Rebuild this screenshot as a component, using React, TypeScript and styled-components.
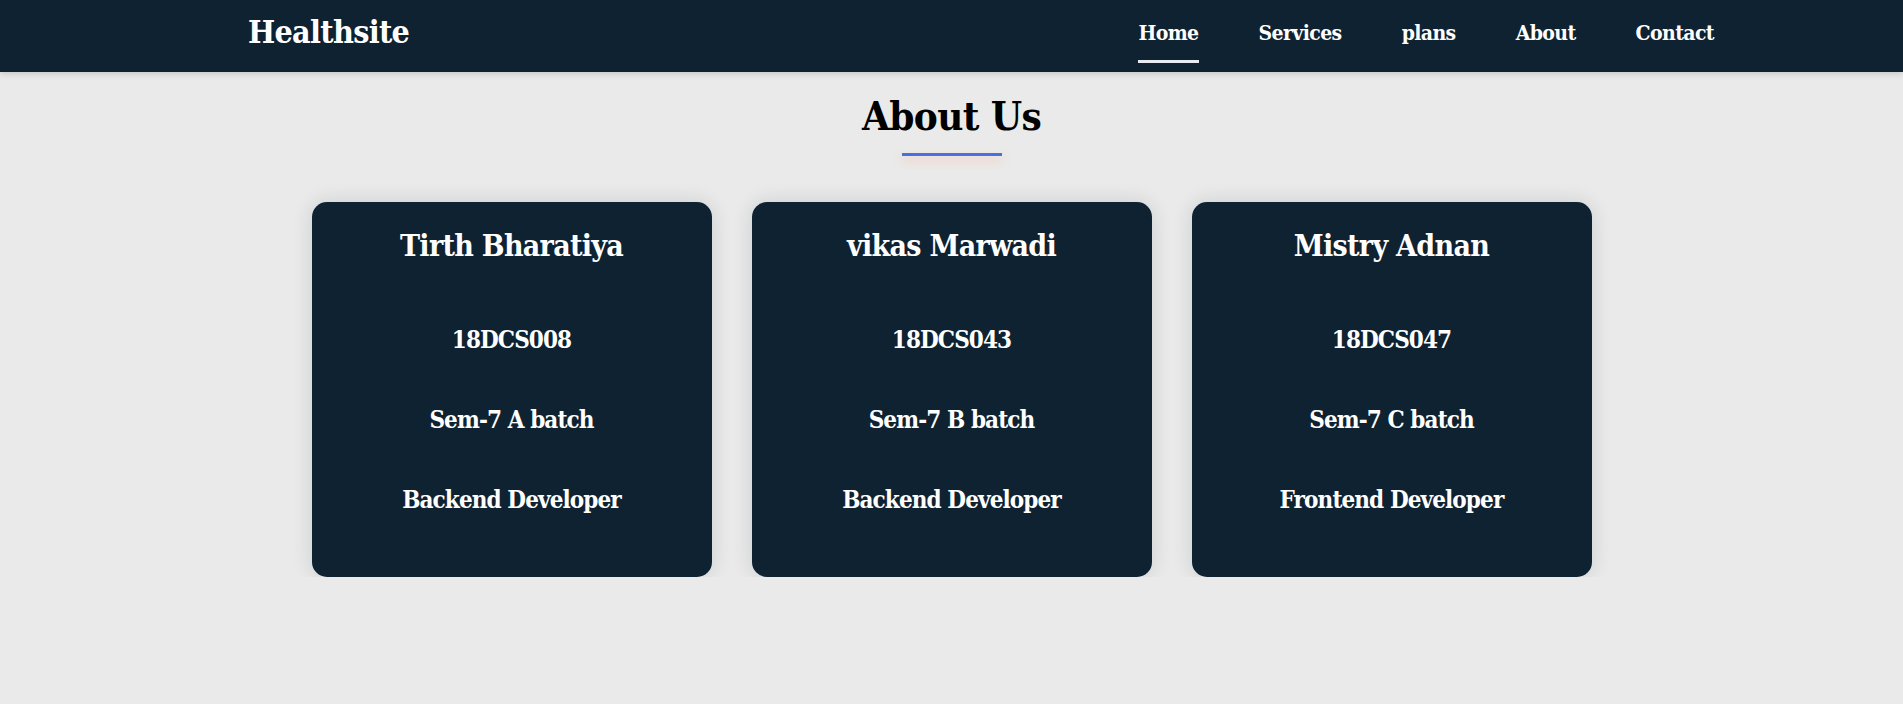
import React from 'react';
import styled, { createGlobalStyle } from 'styled-components';

const GlobalStyle = createGlobalStyle`
  * {
    box-sizing: border-box;
  }

  body {
    margin: 0;
    background: #eaeaea;
    font-family: 'DejaVu Serif', 'Liberation Serif', serif;
    font-stretch: semi-condensed;
    font-weight: bold;
  }
`;

const Navbar = styled.nav`
  height: 72px;
  background: #0f2231;
  display: flex;
  align-items: flex-start;
  justify-content: space-between;
  padding: 0 189px 0 248px;
  box-shadow: 0 2px 6px rgba(0, 0, 0, 0.15);
`;

const Brand = styled.div`
  color: #fff;
  font-size: 32px;
  line-height: 1;
  letter-spacing: -0.7px;
  margin-top: 16px;
`;

const NavLinks = styled.ul`
  display: flex;
  gap: 60px;
  list-style: none;
  margin: 22px 0 0;
  padding: 0;
`;

const NavLink = styled.li<{ $active?: boolean }>`
  color: #fff;
  font-size: 21px;
  line-height: 1;
  letter-spacing: -0.6px;
  padding-bottom: 17px;
  border-bottom: 3px solid ${({ $active }) => ($active ? '#e8ecf2' : 'transparent')};
`;

const Section = styled.section`
  display: flex;
  flex-direction: column;
  align-items: center;
  padding-top: 24px;
`;

const Title = styled.h1`
  margin: 0;
  font-size: 40px;
  line-height: 1;
  letter-spacing: -0.6px;
  color: #000;
`;

const TitleLine = styled.div`
  width: 100px;
  height: 3px;
  margin-top: 17px;
  background: #4a6fe3;
  box-shadow: 0 5px 10px rgba(255, 160, 110, 0.45);
`;

const Cards = styled.div`
  display: flex;
  gap: 40px;
  margin-top: 46px;
`;

const Card = styled.div`
  width: 400px;
  height: 375px;
  background: #0f2231;
  border-radius: 15px;
  box-shadow: 0 0 20px rgba(15, 34, 49, 0.14);
  color: #fff;
  display: flex;
  flex-direction: column;
  align-items: center;
  padding-top: 29px;
`;

const Name = styled.h2`
  margin: 0 0 67px;
  font-size: 30px;
  line-height: 1;
  letter-spacing: -0.7px;
`;

const Info = styled.p`
  margin: 0 0 56px;
  font-size: 24px;
  line-height: 1;
  letter-spacing: -0.9px;
`;

const members = [
  { name: 'Tirth Bharatiya', id: '18DCS008', batch: 'Sem-7 A batch', role: 'Backend Developer' },
  { name: 'vikas Marwadi', id: '18DCS043', batch: 'Sem-7 B batch', role: 'Backend Developer' },
  { name: 'Mistry Adnan', id: '18DCS047', batch: 'Sem-7 C batch', role: 'Frontend Developer' },
];

const App: React.FC = () => {
  return (
    <>
      <GlobalStyle />
      <Navbar>
        <Brand>Healthsite</Brand>
        <NavLinks>
          <NavLink $active>Home</NavLink>
          <NavLink>Services</NavLink>
          <NavLink>plans</NavLink>
          <NavLink>About</NavLink>
          <NavLink>Contact</NavLink>
        </NavLinks>
      </Navbar>
      <Section>
        <Title>About Us</Title>
        <TitleLine />
        <Cards>
          {members.map((m) => (
            <Card key={m.id}>
              <Name>{m.name}</Name>
              <Info>{m.id}</Info>
              <Info>{m.batch}</Info>
              <Info>{m.role}</Info>
            </Card>
          ))}
        </Cards>
      </Section>
    </>
  );
};

export default App;
